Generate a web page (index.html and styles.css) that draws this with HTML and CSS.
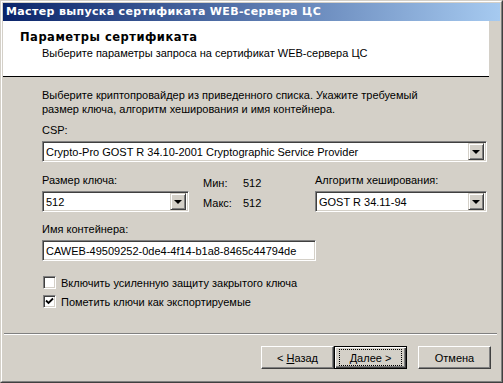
FILE: index.html
```html
<!DOCTYPE html>
<html lang="ru">
<head>
    <meta charset="UTF-8">
    <title>Мастер выпуска сертификата WEB-сервера ЦС</title>
    <link rel="stylesheet" href="styles.css">
</head>
<body>
    <div class="window">
        <div class="frame">
            <div class="title-bar">Мастер выпуска сертификата WEB-сервера ЦС</div>

            <div class="header">
                <div class="header-title">Параметры сертификата</div>
                <div class="header-sub">Выберите параметры запроса на сертификат WEB-сервера ЦС</div>
            </div>

            <div class="content">
                <p class="intro">Выберите криптопровайдер из приведенного списка. Укажите требуемый<br>размер ключа, алгоритм хеширования и имя контейнера.</p>

                <div class="label">CSP:</div>
                <div class="combo combo-csp">
                    <span class="combo-text">Crypto-Pro GOST R 34.10-2001 Cryptographic Service Provider</span>
                    <span class="combo-btn"><span class="arrow"></span></span>
                </div>

                <div class="key-row">
                    <div class="field">
                        <div class="label">Размер ключа:</div>
                        <div class="combo combo-size">
                            <span class="combo-text">512</span>
                            <span class="combo-btn"><span class="arrow"></span></span>
                        </div>
                    </div>

                    <div class="limits">
                        <div class="limit"><span class="limit-name">Мин:</span><span>512</span></div>
                        <div class="limit"><span class="limit-name">Макс:</span><span>512</span></div>
                    </div>

                    <div class="field">
                        <div class="label">Алгоритм хеширования:</div>
                        <div class="combo combo-hash">
                            <span class="combo-text">GOST R 34.11-94</span>
                            <span class="combo-btn"><span class="arrow"></span></span>
                        </div>
                    </div>
                </div>

                <div class="label name-label">Имя контейнера:</div>
                <div class="textbox">CAWEB-49509252-0de4-4f14-b1a8-8465c44794de</div>

                <div class="checks">
                    <label class="check">
                        <span class="box"></span>
                        <span>Включить усиленную защиту закрытого ключа</span>
                    </label>
                    <label class="check">
                        <span class="box">
                            <svg width="9" height="9" viewBox="0 0 9 9">
                                <path d="M1 3.5 L3.5 6 L8 1.5" fill="none" stroke="#000" stroke-width="1.8"/>
                            </svg>
                        </span>
                        <span>Пометить ключи как экспортируемые</span>
                    </label>
                </div>
            </div>

            <div class="separator"></div>

            <div class="buttons">
                <div class="button"><span>&lt;&nbsp;<u>Н</u>азад</span></div>
                <div class="button default"><span class="focus"><span><u>Д</u>алее&nbsp;&gt;</span></span></div>
                <div class="button cancel"><span>Отмена</span></div>
            </div>
        </div>
    </div>
</body>
</html>
```

FILE: styles.css
```css
html, body {
    margin: 0;
    padding: 0;
}

body {
    width: 503px;
    height: 383px;
    background: #d4d0c8;
    font-family: "Liberation Sans", Arial, sans-serif;
    font-size: 11px;
    color: #000;
    overflow: hidden;
}

.window {
    width: 503px;
    height: 383px;
    box-sizing: border-box;
    border: 1px solid;
    border-color: #d4d0c8 #404040 #404040 #d4d0c8;
}

.frame {
    height: 100%;
    box-sizing: border-box;
    border: 1px solid;
    border-color: #fff #808080 #808080 #fff;
    padding: 1px;
    display: flex;
    flex-direction: column;
}

.title-bar {
    height: 18px;
    line-height: 18px;
    padding-left: 3px;
    color: #fff;
    font-family: "DejaVu Sans", sans-serif;
    font-weight: bold;
    font-size: 11px;
    letter-spacing: 0.35px;
    background: linear-gradient(to right, #0a246a, #a6caf0);
    white-space: nowrap;
}

.header {
    width: 486px;
    height: 56px;
    background: #fff;
    border-bottom: 1px solid #000;
    padding: 9px 0 0 17px;
    box-sizing: border-box;
    line-height: 14px;
}

.header-title {
    font-family: "DejaVu Sans", sans-serif;
    font-weight: bold;
    font-size: 11.5px;
    letter-spacing: 0.5px;
}

.header-sub {
    margin: 2px 0 0 22px;
}

.content {
    padding: 11px 0 0 39px;
    line-height: 14px;
    flex: 1;
}

.intro {
    margin: 0 0 7px;
}

.label {
    height: 14px;
    margin-bottom: 4px;
}

.combo,
.textbox {
    height: 21px;
    box-sizing: border-box;
    border: 1px solid;
    border-color: #808080 #fff #fff #808080;
    background: #fff;
    display: flex;
    align-items: center;
    box-shadow: inset 1px 1px 0 #404040, inset -1px -1px 0 #d4d0c8;
    white-space: nowrap;
}

.combo-text {
    flex: 1;
    padding-left: 3px;
}

.combo-btn {
    width: 16px;
    height: 17px;
    margin-right: 2px;
    box-sizing: border-box;
    background: #d4d0c8;
    border: 1px solid;
    border-color: #d4d0c8 #404040 #404040 #d4d0c8;
    box-shadow: inset 1px 1px 0 #fff, inset -1px -1px 0 #808080;
    display: flex;
    align-items: center;
    justify-content: center;
}

.arrow {
    width: 0;
    height: 0;
    border-left: 4px solid transparent;
    border-right: 4px solid transparent;
    border-top: 4px solid #000;
    margin-top: 1px;
}

.combo-csp {
    width: 445px;
}

.key-row {
    display: flex;
    margin-top: 11px;
    height: 39px;
}

.combo-size {
    width: 147px;
}

.combo-hash {
    width: 172px;
}

.limits {
    width: 126px;
    box-sizing: border-box;
    padding: 3px 0 0 14px;
}

.limit {
    display: flex;
    height: 14px;
    margin-bottom: 6px;
}

.limit-name {
    width: 40px;
}

.textbox {
    width: 274px;
    padding-left: 3px;
}

.name-label {
    margin-top: 10px;
}

.checks {
    margin-top: 15px;
}

.check {
    display: flex;
    align-items: center;
    height: 13px;
    margin-bottom: 6px;
    margin-left: 1px;
}

.box {
    width: 13px;
    height: 13px;
    box-sizing: border-box;
    background: #fff;
    border: 1px solid;
    border-color: #808080 #fff #fff #808080;
    box-shadow: inset 1px 1px 0 #404040, inset -1px -1px 0 #d4d0c8;
    margin-right: 5px;
    display: flex;
    align-items: center;
    justify-content: center;
}

.box svg {
    display: block;
}

.separator {
    margin: 0 3px 0 1px;
    height: 0;
    border-top: 1px solid #808080;
    border-bottom: 1px solid #fff;
}

.buttons {
    display: flex;
    justify-content: flex-end;
    padding: 11px 9px 0 0;
    height: 45px;
    box-sizing: border-box;
}

.button {
    width: 73px;
    height: 23px;
    box-sizing: border-box;
    border: 1px solid;
    border-color: #fff #404040 #404040 #fff;
    box-shadow: inset -1px -1px 0 #808080;
    display: flex;
    align-items: center;
    justify-content: center;
}

.button.default {
    border: 1px solid #000;
    box-shadow: inset 1px 1px 0 #fff, inset -1px -1px 0 #404040, inset -2px -2px 0 #808080;
}

.focus {
    display: flex;
    align-items: center;
    justify-content: center;
    width: 61px;
    height: 15px;
    outline: 1px dotted #000;
}

.button.cancel {
    margin-left: 11px;
}
```
